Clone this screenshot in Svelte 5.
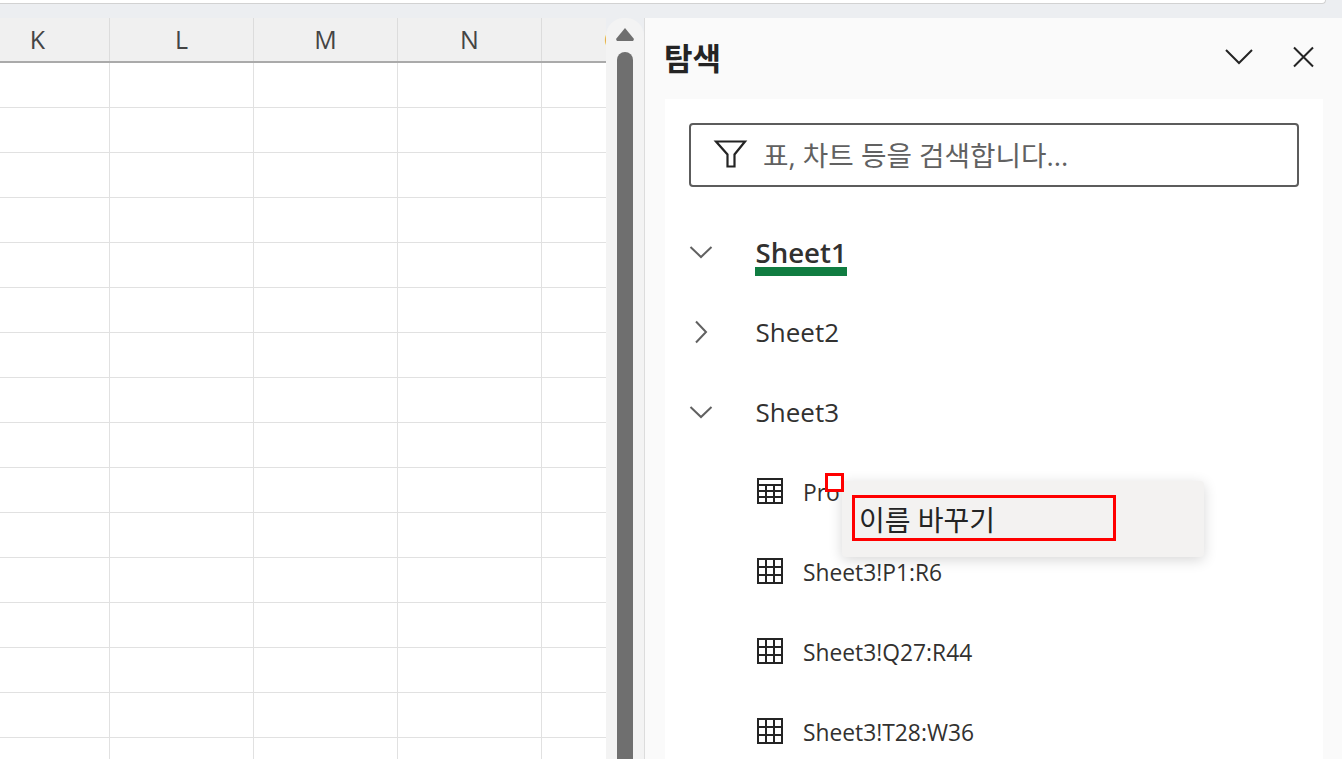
<script>
  const cols = ['K', 'L', 'M', 'N', 'O'];
  const rows = Array.from({ length: 16 });
  const ranges = ['Sheet3!P1:R6', 'Sheet3!Q27:R44', 'Sheet3!T28:W36'];
</script>

<div class="page">
  <div class="topbar"><div class="strip"></div></div>
  <div class="main">
    <section class="sheet">
      <div class="row head">
        {#each cols as c}<div class="hcell" class:edge={c === 'O'}>{c}</div>{/each}
      </div>
      {#each rows as _}
        <div class="row">
          {#each cols as c}<div class="cell"></div>{/each}
        </div>
      {/each}
    </section>

    <div class="scroll">
      <div class="arrow"></div>
      <div class="thumb"></div>
    </div>

    <aside class="panel">
      <header class="phead">
        <h1>탐색</h1>
        <div class="actions">
          <svg width="30" height="20" viewBox="0 0 30 20"><path d="M2 3l13 13L28 3" class="ln" /></svg>
          <svg width="24" height="24" viewBox="0 0 24 24"><path d="M3 2.500l19 19M22 2.500l-19 19" class="ln" /></svg>
        </div>
      </header>
      <div class="card">
        <div class="search">
          <svg width="36" height="32" viewBox="0 0 36 32"><path d="M4 3.500h29L22.500 16.500v12h-7v-12z" class="ln ft" /></svg>
          <span>표, 차트 등을 검색합니다...</span>
        </div>

        <ul class="tree">
          <li class="node">
            <svg class="chev" width="26" height="26" viewBox="0 0 26 26"><path d="M2.500 8l10.500 10L23.500 8" class="cl" /></svg>
            <span class="sel">Sheet1</span>
          </li>
          <li class="node">
            <svg class="chev" width="26" height="26" viewBox="0 0 26 26"><path d="M8 2.500l10 10.500L8 23.500" class="cl" /></svg>
            <span>Sheet2</span>
          </li>
          <li class="node">
            <svg class="chev" width="26" height="26" viewBox="0 0 26 26"><path d="M2.500 8l10.500 10L23.500 8" class="cl" /></svg>
            <span>Sheet3</span>
          </li>
          <li class="leaf">
            <svg class="tbl" width="26" height="26" viewBox="0 0 26 26">
              <path d="M1 1h24v24H1zM1 7h24M1 13h24M1 19h24M9 7v18M17 7v18" class="gr" />
            </svg>
            <span>Pro</span>
          </li>
          {#each ranges as r}
            <li class="leaf">
              <svg class="tbl" width="26" height="26" viewBox="0 0 26 26">
                <path d="M1 1h24v24H1zM1 9h24M1 17h24M9 1v24M17 1v24" class="gr" />
              </svg>
              <span>{r}</span>
            </li>
          {/each}
        </ul>
      </div>
    </aside>
  </div>

  <div class="menu"><div class="item">이름 바꾸기</div></div>
  <div class="marker"></div>
</div>

<style>
  :global(body) { margin: 0; background: #fff; }
  .page {
    position: relative;
    width: 1342px;
    height: 759px;
    overflow: hidden;
    background: #eceef1;
    font-family: "Open Sans", "Noto Sans CJK KR", sans-serif;
    color: #323130;
  }
  .topbar { height: 18px; }
  .strip {
    width: 1325px;
    height: 3px;
    background: #fff;
    border-bottom: 1px solid #d2d2d2;
    border-right: 1px solid #d2d2d2;
    border-bottom-right-radius: 6px;
  }
  .main { display: flex; height: 741px; }
  .sheet { width: 606px; overflow: hidden; background: #fff; flex: none; }
  .row { display: flex; margin-left: -34px; height: 45px; width: 720px; }
  .cell {
    width: 144px;
    flex: none;
    box-sizing: border-box;
    border-right: 1px solid #e1e1e1;
    border-bottom: 1px solid #e1e1e1;
  }
  .head { height: 45px; background: #f0f0f0; box-sizing: border-box; border-bottom: 2px solid #aaaaaa; }
  .hcell {
    width: 144px;
    flex: none;
    box-sizing: border-box;
    border-right: 1px solid #dcdcdc;
    text-align: center;
    font-size: 25px;
    line-height: 42px;
    color: #444;
    font-family: "Open Sans", sans-serif;
  }
  .edge { color: #d9984a; }
  .scroll {
    position: relative;
    width: 38px;
    flex: none;
    background: #f3f3f3;
    border-radius: 18px 18px 0 0;
  }
  .arrow {
    position: absolute;
    left: 10px;
    top: 10px;
    width: 18px;
    height: 13px;
    background: #6f6f6f;
    clip-path: polygon(50% 0, 100% 85%, 95% 100%, 5% 100%, 0 85%);
  }
  .thumb {
    position: absolute;
    left: 11px;
    top: 34px;
    bottom: 0;
    width: 16px;
    background: #6f6f6f;
    border-radius: 8px 8px 0 0;
  }
  .panel {
    flex: 1;
    min-width: 0;
    background: #fafafa;
    border-left: 1px solid #dcdcdc;
    padding: 0 19px 0 20px;
    box-sizing: border-box;
  }
  .phead {
    height: 81px;
    display: flex;
    align-items: center;
    justify-content: space-between;
    box-sizing: border-box;
    padding-bottom: 3px;
  }
  h1 {
    margin: 0 0 0 -1px;
    font-size: 31px;
    font-weight: 700;
    color: #242424;
    line-height: 40px;
    letter-spacing: 0;
    padding-top: 1px;
  }
  .actions { display: flex; align-items: center; gap: 37px; margin-right: 8px; }
  .actions svg { display: block; }
  .ln { fill: none; stroke: #242424; stroke-width: 2; }
  .ft { stroke-width: 2.2; }
  .card {
    height: 660px;
    background: #fff;
    padding: 24px 24px 0;
    box-sizing: border-box;
    overflow: hidden;
  }
  .search {
    height: 64px;
    box-sizing: border-box;
    border: 2px solid #5c5c5c;
    border-radius: 4px;
    display: flex;
    align-items: center;
    padding-left: 22px;
    gap: 14px;
    font-size: 27.700px;
    color: #616161;
  }
  .search svg { flex: none; margin-top: -2px; margin-left: -1px; }
  .search span { margin-top: -3px; margin-left: 1px; }
  .tree { list-style: none; margin: 25px 0 0; padding: 0; }
  .node, .leaf { display: flex; align-items: center; height: 80px; }
  .node { font-size: 26px; }
  .node > span { padding-left: 0.500px; }
  .chev { margin-left: -1px; margin-right: 41px; flex: none; }
  .cl { fill: none; stroke: #616161; stroke-width: 2; }
  .sel {
    font-weight: 600;
    font-size: 27.600px;
    color: #323130;
    position: relative;
    line-height: 38px;
    margin-top: -1px;
  }
  .sel::after {
    content: "";
    position: absolute;
    left: 0;
    right: 0;
    bottom: -5px;
    height: 9px;
    background: #107c41;
  }
  .leaf { padding-left: 68px; font-size: 22.800px; gap: 20px; }
  .tbl { flex: none; margin-top: -2px; }
  .gr { fill: none; stroke: #242424; stroke-width: 2; }
  .menu {
    position: absolute;
    left: 842px;
    top: 481px;
    width: 362px;
    height: 76px;
    background: #f3f2f1;
    border-radius: 4px;
    box-shadow: 0 3px 14px rgba(0, 0, 0, 0.16);
  }
  .item {
    position: absolute;
    left: 10px;
    top: 14px;
    width: 264px;
    height: 46px;
    box-sizing: border-box;
    border: 3px solid #f00;
    padding-left: 4px;
    font-size: 28px;
    line-height: 44px;
    color: #242424;
  }
  .marker {
    position: absolute;
    left: 825px;
    top: 473px;
    width: 19px;
    height: 19px;
    box-sizing: border-box;
    border: 3px solid #f00;
    background: #fff;
  }
</style>
